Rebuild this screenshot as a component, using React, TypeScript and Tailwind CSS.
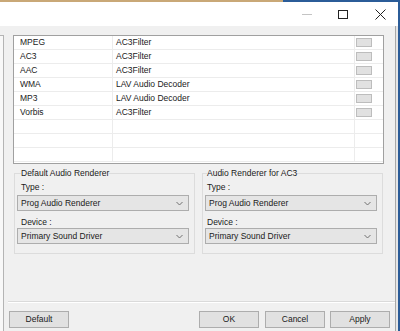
import React from "react";

const rows: [string, string, boolean][] = [
  ["MPEG", "AC3Filter", true],
  ["AC3", "AC3Filter", true],
  ["AAC", "AC3Filter", true],
  ["WMA", "LAV Audio Decoder", true],
  ["MP3", "LAV Audio Decoder", true],
  ["Vorbis", "AC3Filter", true],
  ["", "", false],
  ["", "", false],
  ["", "", false],
];

function Chevron() {
  return (
    <svg width="7" height="5" viewBox="0 0 7 5" className="shrink-0">
      <path d="M0.5 1 L3.5 4 L6.5 1" fill="none" stroke="#707070" strokeWidth="1" />
    </svg>
  );
}

function Combo({ text }: { text: string }) {
  return (
    <div className="flex h-[16px] w-[172px] items-center justify-between border border-[#adadad] bg-[#e5e5e5] pl-[3px] pr-[5px]">
      <span className="leading-[14px]">{text}</span>
      <Chevron />
    </div>
  );
}

function Group({ title, legendMl, labelMl }: { title: string; legendMl: string; labelMl: string }) {
  return (
    <fieldset className="w-[181px] border border-[#dcdcdc] px-[2px] pb-[9px]">
      <legend className={`${legendMl} leading-[10px]`}>{title}</legend>
      <div className={`mt-[4px] ${labelMl} leading-[10px]`}>Type :</div>
      <div className="mt-[3px]">
        <Combo text="Prog Audio Renderer" />
      </div>
      <div className={`mt-[6px] ${labelMl} leading-[10px]`}>Device :</div>
      <div className="mt-[1px]">
        <Combo text="Primary Sound Driver" />
      </div>
    </fieldset>
  );
}

function Btn({ text, cls }: { text: string; cls: string }) {
  return (
    <div className={`flex h-[17px] w-[60px] items-center justify-center border border-[#adadad] bg-[#e1e1e1] ${cls}`}>
      {text}
    </div>
  );
}

export default function App() {
  return (
    <div
      className="flex h-[331px] w-[400px] flex-col overflow-hidden bg-[#f0f0f0] text-[8.5px] text-[#1a1a1a]"
      style={{ fontFamily: '"Liberation Sans", Arial, sans-serif' }}
    >
      {/* top frame strip */}
      <div className="flex h-[2px] shrink-0">
        <div className="w-[283px] bg-[#c9a877]" />
        <div className="flex-1 bg-[#2b5c98]" />
      </div>
      <div className="flex flex-1">
        <div className="flex flex-1 flex-col">
          {/* title bar */}
          <div className="flex h-[24px] shrink-0 items-center justify-end bg-white pr-[12px]">
            <div className="mr-[26px] h-[1px] w-[10px] bg-[#c4c4c4]" />
            <div className="mr-[27px] h-[9px] w-[10px] border border-[#222]" />
            <svg width="11" height="11" viewBox="0 0 11 11">
              <path d="M0.5 0.5 L10.5 10.5 M10.5 0.5 L0.5 10.5" stroke="#222" strokeWidth="1" />
            </svg>
          </div>
          {/* body */}
          <div className="flex flex-1">
            <div className="flex w-[4px] flex-col pt-[9px]">
              <div className="flex-1 border-r border-t border-[#b4b4b4] bg-[#f8f8f8]" />
            </div>
            <div className="flex w-[391px] flex-col pt-[9px]">
              {/* list */}
              <div className="ml-[9px] flex h-[129px] w-[371px] flex-col overflow-hidden border border-[#a0a0a0] bg-white">
                {rows.map(([a, b, box], i) => (
                  <div key={i} className="flex h-[14px] shrink-0 border-b border-[#ececec]">
                    <div className="flex w-[99px] items-center border-r border-[#ececec] pl-[6px]">{a}</div>
                    <div className="flex w-[242px] items-center border-r border-[#ececec] pl-[3px]">{b}</div>
                    <div className="flex flex-1 items-start pl-[1px] pt-[2px]">
                      {box && <div className="h-[9px] w-[16px] border border-[#bdbdbd] bg-[#e1e1e1]" />}
                    </div>
                  </div>
                ))}
              </div>
              {/* groups */}
              <div className="ml-[10px] mt-[4px] flex gap-[7px]">
                <Group title="Default Audio Renderer" legendMl="ml-[4px]" labelMl="ml-[4px]" />
                <Group title="Audio Renderer for AC3" legendMl="ml-[2px]" labelMl="ml-[2px]" />
              </div>
              {/* separator */}
              <div className="ml-[4px] mt-[47px] h-[1px] bg-[#dadada]" />
              <div className="ml-[4px] h-[1px] bg-white" />
              {/* buttons */}
              <div className="mt-[8px] flex">
                <Btn text="Default" cls="ml-[5px]" />
                <Btn text="OK" cls="ml-[130px]" />
                <Btn text="Cancel" cls="ml-[6px]" />
                <Btn text="Apply" cls="ml-[5px]" />
              </div>
            </div>
            <div className="w-[1px] bg-[#a8a8a8]" />
            <div className="w-[2px] bg-[#e6e6e6]" />
          </div>
        </div>
        <div className="w-[2px] bg-[#2b5c98]" />
      </div>
    </div>
  );
}
